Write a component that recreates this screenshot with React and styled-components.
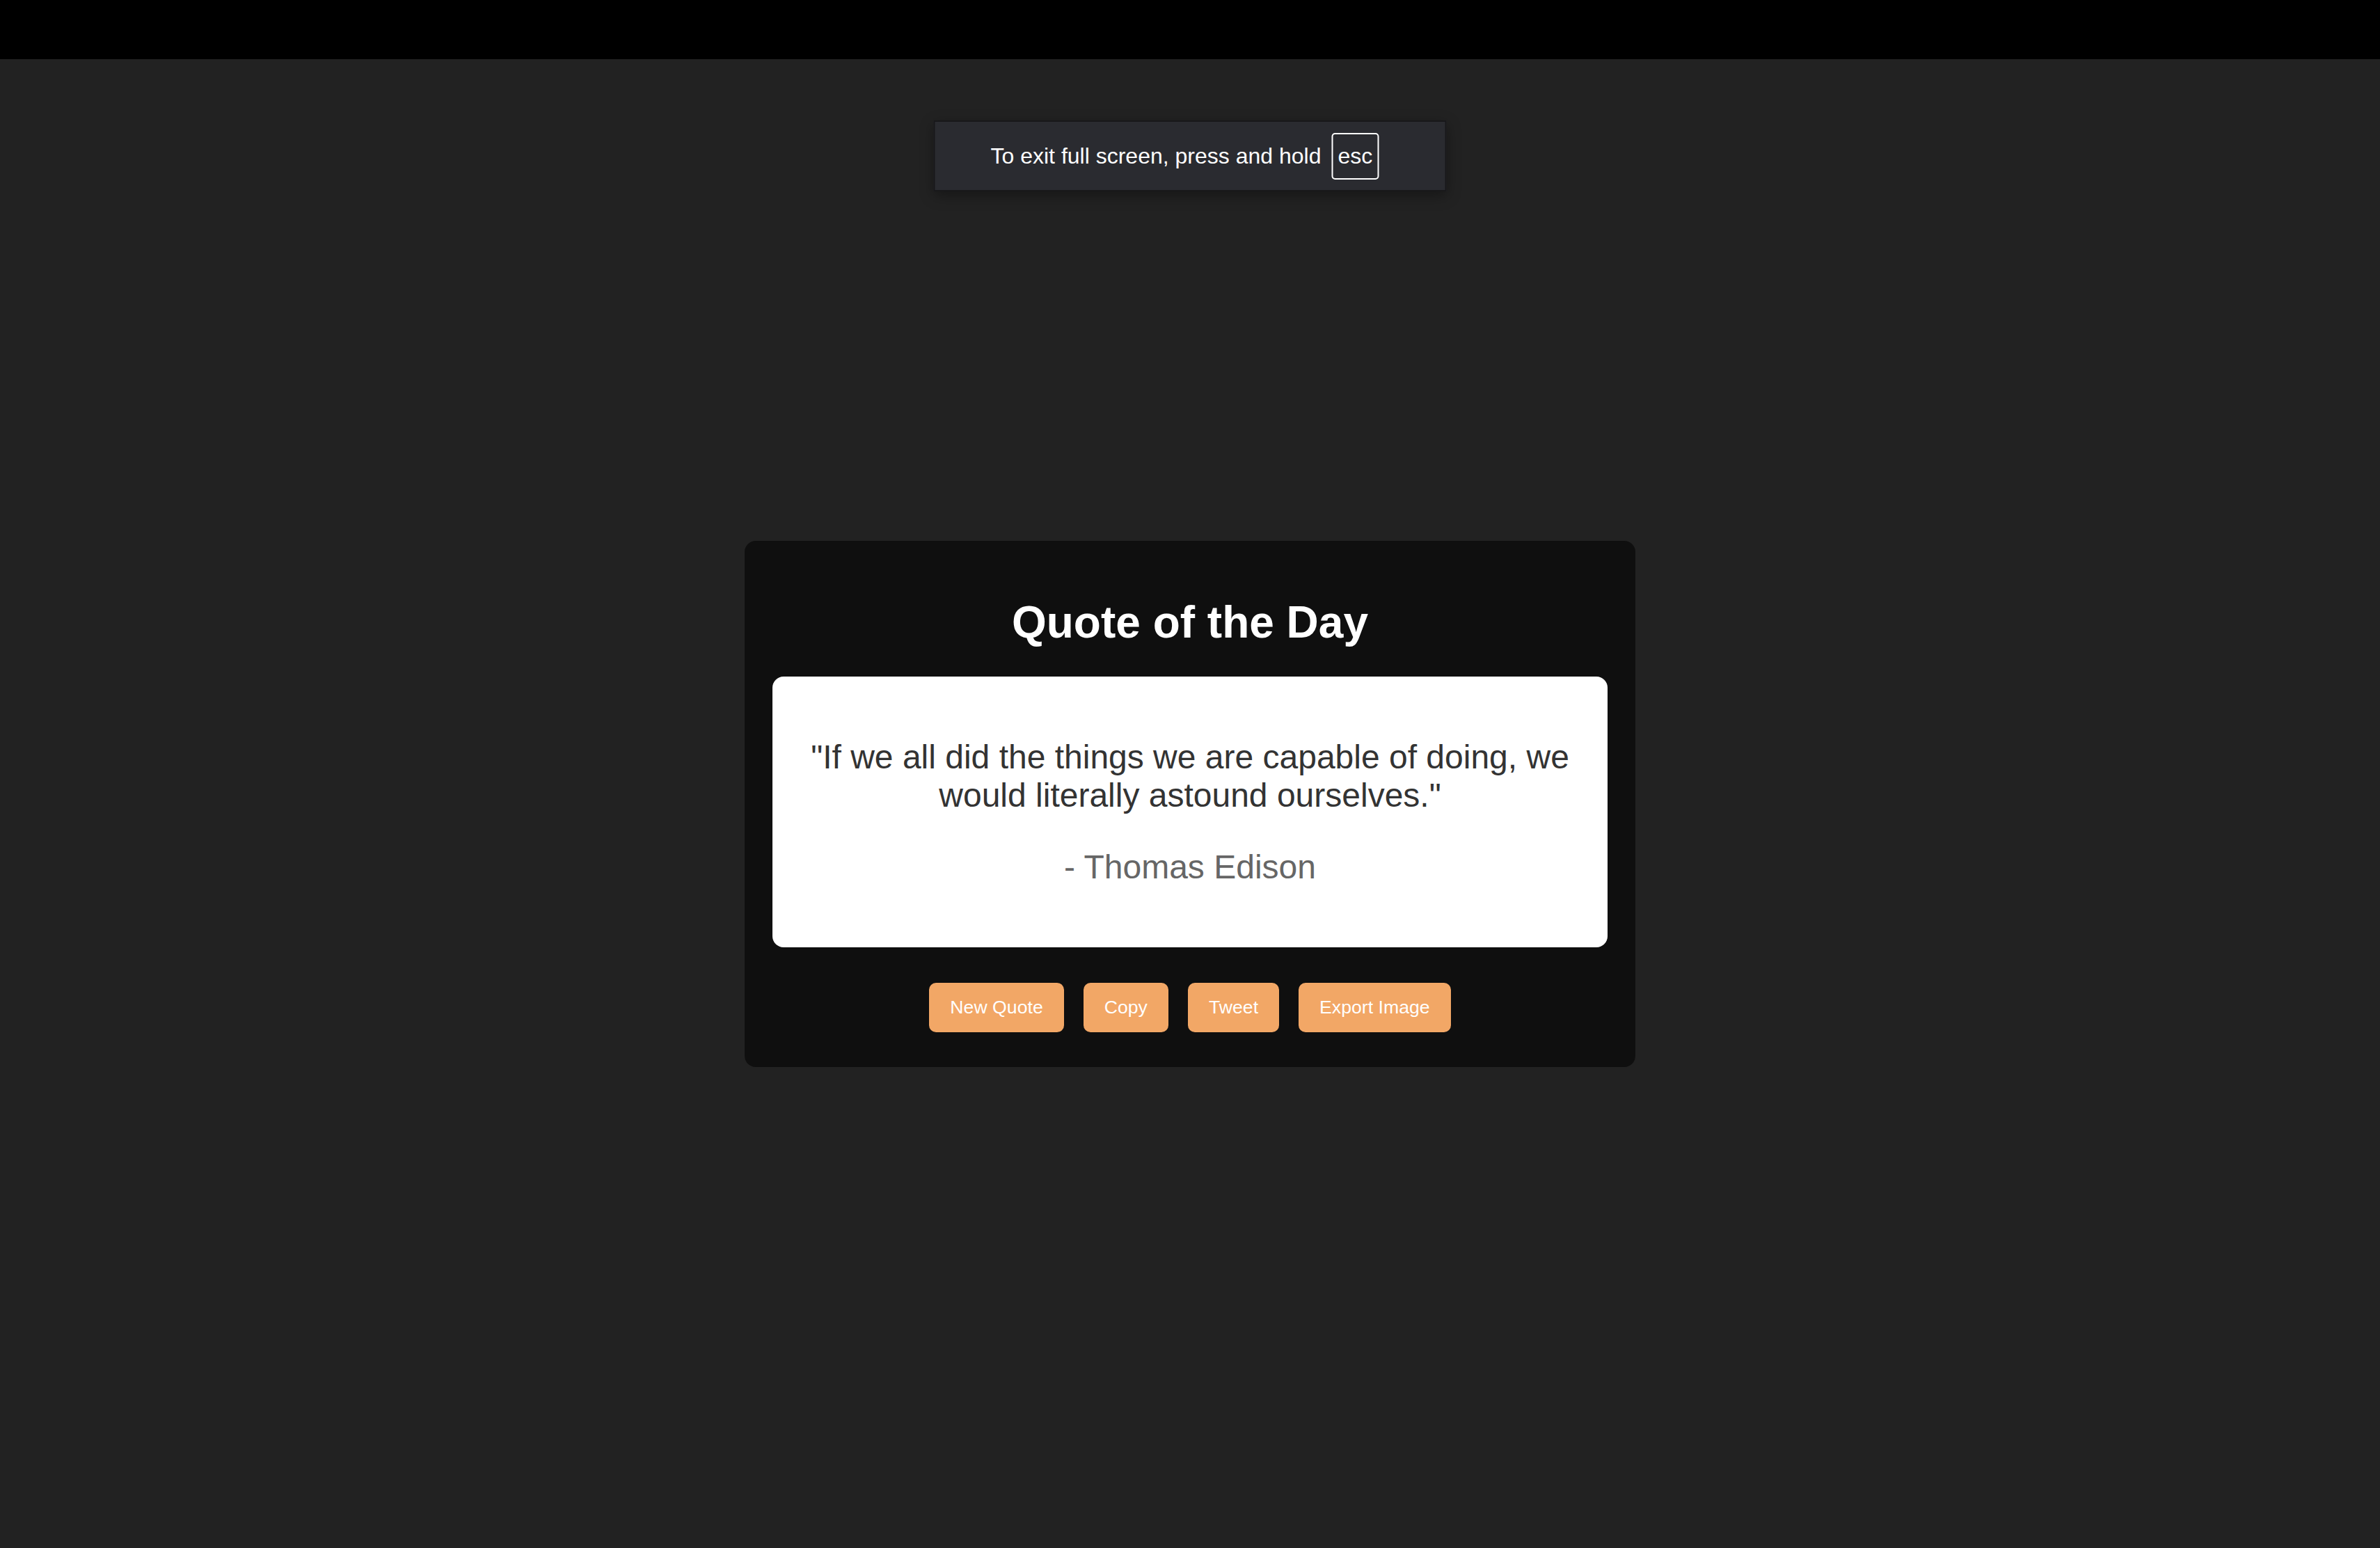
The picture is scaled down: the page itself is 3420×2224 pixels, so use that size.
import React from "react";
import styled, { createGlobalStyle } from "styled-components";

// 페이지 기본 스타일
const GlobalStyle = createGlobalStyle`
  html, body {
    margin: 0;
    padding: 0;
    background: #222222;
  }
  #root {
    min-height: 100vh;
  }
`;

const Screen = styled.div`
  position: relative;
  min-height: 100vh;
  display: flex;
  flex-direction: column;
  font-family: "Liberation Sans", Arial, sans-serif;
`;

// 상단 검은 막대
const TopBar = styled.div`
  height: 85px;
  background: #000000;
  flex-shrink: 0;
`;

const Stage = styled.main`
  flex: 1;
  display: flex;
  align-items: center;
  justify-content: center;
`;

// 전체화면 안내 토스트 (화면 위에 떠 있음)
const Toast = styled.div`
  position: absolute;
  top: 173px;
  left: 50%;
  transform: translateX(-50%);
  width: 737px;
  height: 102px;
  box-sizing: border-box;
  padding: 0 95px 0 80px;
  display: flex;
  align-items: center;
  gap: 15px;
  background: #2a2b30;
  border: 2px solid #18181a;
  box-shadow: 0 6px 18px rgba(0, 0, 0, 0.35);
  font-family: "Liberation Sans", Arial, sans-serif;
  font-size: 32px;
  color: #ffffff;
  white-space: nowrap;
`;

const KeyCap = styled.span`
  display: inline-flex;
  align-items: center;
  justify-content: center;
  width: 74px;
  height: 67px;
  box-sizing: border-box;
  border: 2px solid #ffffff;
  border-radius: 5px;
`;

const Card = styled.section`
  width: 1280px;
  box-sizing: border-box;
  padding: 40px 40px 50px;
  background: #0f0f0f;
  border-radius: 16px;
  text-align: center;
`;

const Title = styled.h1`
  margin: 40px 0 41px;
  font-size: 64px;
  font-weight: bold;
  color: #ffffff;
`;

const QuoteBox = styled.div`
  background: #ffffff;
  border-radius: 16px;
  padding: 40px;
`;

const QuoteText = styled.p`
  margin: 48px 0;
  font-size: 48px;
  color: ${(props) => (props.$author ? "#666666" : "#333333")};
`;

const Actions = styled.div`
  display: flex;
  justify-content: center;
  gap: 28px;
  margin-top: 51px;
`;

const ActionButton = styled.button`
  padding: 20px 30px;
  border: none;
  border-radius: 10px;
  background: #f2a766;
  color: #ffffff;
  font-family: "Liberation Sans", Arial, sans-serif;
  font-size: 26.67px;
  line-height: normal;
  cursor: pointer;
`;

const buttons = ["New Quote", "Copy", "Tweet", "Export Image"];

const App = () => {
  return (
    <>
      <GlobalStyle />
      <Screen>
        <TopBar />
        <Stage>
          <Card>
            <Title>Quote of the Day</Title>
            <QuoteBox>
              <QuoteText>
                "If we all did the things we are capable of doing, we would
                literally astound ourselves."
              </QuoteText>
              <QuoteText $author>- Thomas Edison</QuoteText>
            </QuoteBox>
            <Actions>
              {buttons.map((label) => (
                <ActionButton key={label}>{label}</ActionButton>
              ))}
            </Actions>
          </Card>
        </Stage>
        <Toast>
          To exit full screen, press and hold <KeyCap>esc</KeyCap>
        </Toast>
      </Screen>
    </>
  );
};

export default App;
